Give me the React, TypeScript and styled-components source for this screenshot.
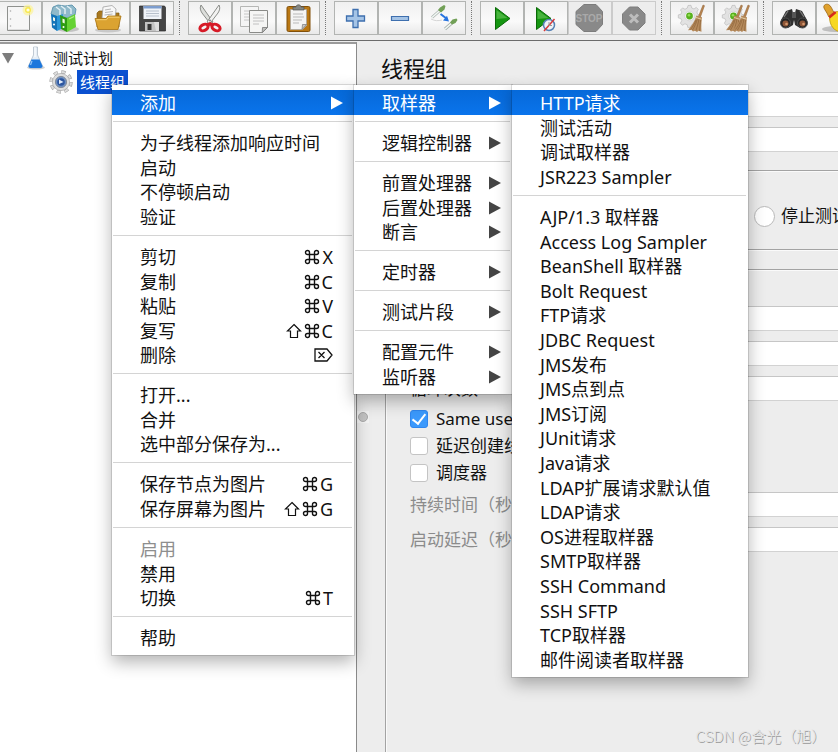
import React from 'react';
import styled, { createGlobalStyle, css } from 'styled-components';

const Global = createGlobalStyle`
  * { box-sizing: border-box; }
  body {
    margin: 0;
    overflow: hidden;
    background: #ededed;
    color: #111;
    font-family: "Noto Sans", "Noto Sans CJK SC", sans-serif;
  }
`;

const Window = styled.div`
  position: relative;
  display: flex;
  flex-direction: column;
  height: 100vh;
  overflow: hidden;
  background: #ededed;
`;

/* ---------- toolbar ---------- */

const Toolbar = styled.header`
  display: flex;
  flex: none;
  height: 41px;
  padding-top: 1px;
  margin-left: -2px;
  background: #ededed;
  border-bottom: 1px solid #6b6b6b;
`;

const ToolGroup = styled.div`
  display: flex;
  flex: none;
  height: 34px;

  & + & {
    margin-left: 14px;
    position: relative;
  }

  & + &::before {
    content: '';
    position: absolute;
    left: -9px;
    top: 0;
    bottom: 0;
    border-left: 1px dotted #777;
  }
`;

const ToolButton = styled.button`
  display: flex;
  align-items: center;
  justify-content: center;
  width: 44px;
  height: 34px;
  padding: 0;
  border: 1px solid #b2b4b2;
  background: linear-gradient(#f0f0f0, #fafafa 60%, #e9e9e9);

  &:disabled {
    border-color: #cbcbcb;
    background: #ededed;
  }
`;

const Icon = styled.svg`
  display: block;
  flex: none;
  overflow: visible;
`;

const Tool = ({ label, disabled, children }: { label: string; disabled?: boolean; children: React.ReactNode }) => (
  <ToolButton type="button" aria-label={label} disabled={disabled}>
    <Icon width="32" height="32" viewBox="0 0 32 32">{children}</Icon>
  </ToolButton>
);

const PlusShape = 'M14 7.500h5v6.500h6.500v5H19v6.500h-5V19H7.500v-5H14z';

const Broom = ({ x = 0 }: { x?: number }) => (
  <g transform={`translate(${x} 0)`}>
    <path d="M26 3l1.500.7-4.300 12-2-.7z" fill="#b98550" stroke="#8b5f32" strokeWidth=".5" />
    <path d="M19.500 13.500l5.500 1.800c-.5 4-1 9.500-.5 14.500l-3-1-1.500 1.200-2-1.200-2 .7-1.500-1.500-3.500.3c3-4.500 7-9 8.500-14.800z" fill="#b58a5c" />
    <path d="M20.500 16c-1 5-3 8.500-5 12M22 16.500c-.7 5-2 8.500-3 12M23.800 17c-.6 5-1 8-1.200 12M19 18c-1.500 4-3.500 7-5.500 9.500" fill="none" stroke="#8d6338" strokeWidth=".7" />
    <path d="M19 15.500l5.600 1.800" stroke="#e6cfa5" />
  </g>
);

const GearBits = () => (
  <>
    <path d="M12 3.500l3-.2.700 2.700 2.300 1 2.300-1.600 2 2.100-1.400 2.500.8 2.300 2.700.7v3l-2.700.7-1 2.300 1.600 2.300-2.200 2-2.300-1.400-2.300.9-.7 2.600h-3l-.6-2.700-2.300-.9-2.500 1.500-2-2.200 1.400-2.400-.9-2.200-2.600-.6v-3l2.700-.7.9-2.300L4.500 8l2.100-2.100L9 7.300 11.300 6z" fill="#e2e2e2" stroke="#bcbcbc" strokeWidth=".7" />
    <circle cx="13.500" cy="14" r="4.800" fill="#f4f4f4" stroke="#c8c8c8" strokeWidth=".6" />
    <circle cx="13.500" cy="14" r="3.400" fill="#57b11c" />
    <circle cx="13" cy="13.200" r="1.300" fill="#93dd55" />
  </>
);

const TopBar = () => (
  <Toolbar>
    <ToolGroup>
      <Tool label="New">
        <path d="M3.500 4.500h22v24h-22z" fill="#f6f6f6" stroke="#8f918e" />
        <path d="M4.500 27.500h20" stroke="#ddd" />
        <circle cx="6.500" cy="9" r=".8" fill="#aaa" />
        <circle cx="6.500" cy="17" r=".8" fill="#aaa" />
        <circle cx="6.500" cy="24" r=".8" fill="#aaa" />
        <circle cx="24" cy="8" r="5.500" fill="#fbf3a0" opacity=".75" />
        <circle cx="24" cy="8" r="3" fill="#f8e84c" />
        <circle cx="24" cy="8" r="1.600" fill="#fffde0" />
      </Tool>
      <Tool label="Templates">
        <ellipse cx="20" cy="27" rx="11" ry="3" fill="#000" opacity=".18" />
        <path d="M3 12l2-7 5-2 7 1 7-1 4 4-1 6-8 3-9-1z" fill="#8fb9ca" stroke="#4f8aa6" strokeWidth=".8" />
        <path d="M8 5l4 3v6M13 4l4 3v5M19 4l4 3v5" fill="none" stroke="#e4f1f6" strokeWidth="1.400" />
        <path d="M3 12l6 2v15l-5-3.500z" fill="#1273b8" />
        <path d="M9 14l6-2v14l-6 3z" fill="#2b97d8" />
        <path d="M12 13l7 3v14l-6-3z" fill="#2d9c12" />
        <path d="M19 16l8-4 1 13-9 5z" fill="#65d233" />
        <path d="M5 15v3.500l2 .8V16zM14.500 16.500v4l2.200 1v-4z" fill="#f3f8e9" />
        <circle cx="6" cy="22.500" r="1" fill="#fff" />
        <circle cx="15.500" cy="25" r="1" fill="#fff" />
        <path d="M21 17l5-2.500" stroke="#b2f089" strokeWidth="1.200" />
      </Tool>
      <Tool label="Open">
        <ellipse cx="16" cy="28" rx="13" ry="2.500" fill="#000" opacity=".15" />
        <path d="M5 11l2-2h7l2 2h11v14H5z" fill="#a9781f" stroke="#80590f" strokeWidth=".7" />
        <path d="M10 16l1-11 9-1.500L24 7l-1 11z" fill="#f8f8f8" stroke="#979797" strokeWidth=".7" />
        <path d="M13 8l6-1M13 10.500l8-1M12.500 13l8-1" stroke="#b0b0b0" strokeWidth=".9" />
        <path d="M3 16.500h11l2-2.500h13l-3 13.500H6z" fill="#dba331" stroke="#a87413" strokeWidth=".8" />
        <path d="M4.500 17.700h10l2-2.500h11" fill="none" stroke="#f3ce74" />
      </Tool>
      <Tool label="Save">
        <path d="M3.500 4h25l1 1.500V29h-26z" fill="#464646" stroke="#292929" strokeWidth=".7" />
        <path d="M7.500 4h18v13h-18z" fill="#f0f3f8" />
        <path d="M7.500 4h18v2.500h-18z" fill="#7d9dce" />
        <path d="M10 9h13M10 11.500h13M10 14h13" stroke="#b8c0cc" />
        <path d="M9 20h14v9H9z" fill="#c3c3c3" />
        <path d="M11.500 22h4v6h-4z" fill="#383838" />
        <path d="M18 20h5v9h-3z" fill="#dedede" />
      </Tool>
    </ToolGroup>

    <ToolGroup>
      <Tool label="Cut">
        <path d="M7 3c-1.500 3-.5 5.500 1 8l8.500 11 2.500-2z" fill="#dcdedb" stroke="#7f817d" strokeWidth=".9" />
        <path d="M25 3c1.500 3 .5 5.500-1 8l-8.500 11-2.500-2z" fill="#f2f2f1" stroke="#7f817d" strokeWidth=".9" />
        <circle cx="16" cy="18.500" r=".9" fill="#777" />
        <ellipse cx="10" cy="25.500" rx="4.300" ry="3" fill="#f2f2f2" stroke="#d61a26" strokeWidth="3" transform="rotate(-26 10 25.500)" />
        <ellipse cx="22" cy="25.500" rx="4.300" ry="3" fill="#f2f2f2" stroke="#d61a26" strokeWidth="3" transform="rotate(26 22 25.500)" />
        <path d="M12.500 21.500l3.500-1.500 3.500 1.500-2 3.500-1.500-1.500-1.500 1.500z" fill="#d61a26" />
      </Tool>
      <Tool label="Copy">
        <path d="M2.500 4.500h18v20h-18z" fill="#f5f5f5" stroke="#b6b7b5" />
        <path d="M6 9h11M6 12h6M6 15h5M6 18h5" stroke="#c6c6c6" />
        <path d="M11.500 8.500h18v17l-5 5h-13z" fill="#f5f5f4" stroke="#8a8b88" />
        <path d="M15 13h11M15 16h11M15 19h11M15 22h6" stroke="#c0c0c0" />
        <path d="M29.500 25.500h-5l-.3 5z" fill="#c0c1be" stroke="#777" strokeWidth=".8" />
      </Tool>
      <Tool label="Paste">
        <rect x="5" y="4.500" width="23" height="25" rx="1.500" fill="#b97713" stroke="#81500a" />
        <path d="M8.500 7.500h16v16l-4 4h-12z" fill="#f4f4f4" stroke="#a5a5a5" strokeWidth=".7" />
        <path d="M11 8V5h3c0-3 5-3 5 0h3v3z" fill="#858782" stroke="#555" strokeWidth=".7" />
        <path d="M11 12h10M11 15h11M11 18h9M11 21h6" stroke="#b9b9b9" />
        <path d="M24.500 22.500h-4l-.5 5z" fill="#c8c8c8" stroke="#777" strokeWidth=".7" />
      </Tool>
    </ToolGroup>

    <ToolGroup>
      <Tool label="Expand all">
        <path d={PlusShape} transform="translate(-1 0)" fill="#a5c4e6" stroke="#3e6fae" strokeWidth="1.300" />
      </Tool>
      <Tool label="Collapse all">
        <path d="M7.500 14.500h17v4h-17z" fill="#a5c4e6" stroke="#3e6fae" strokeWidth="1.200" />
      </Tool>
      <Tool label="Toggle">
        <path d="M4 15.500l9-8M17 27l8-7" stroke="#a9b3ae" strokeWidth="3" />
        <path d="M4 15.500l9-8M17 27l8-7" stroke="#f2f7f4" strokeWidth="1.600" />
        <path d="M10 8l2-2.500 4-2.500 1.500 1-1 3.500-3.500 3zM22 20.500l2.500-3 4-1 1 1.500-2 3-3.500 1.500z" fill="#72a057" />
        <path d="M3 17c4 2 7 2 11 1" fill="none" stroke="#d5d5d5" />
        <path d="M12.500 12l6 4.500" stroke="#2774df" strokeWidth="2" />
        <path d="M21 19.500l-6-1 4-4.800z" fill="#2774df" />
      </Tool>
    </ToolGroup>

    <ToolGroup>
      <Tool label="Start">
        <path d="M9.500 5.500v22L24 16.500z" fill="#159611" stroke="#0a6907" />
        <path d="M10.500 8v9l11-1z" fill="#59bd4e" opacity=".75" />
      </Tool>
      <Tool label="Start no pauses">
        <path d="M6.500 5.500v22L21 16.500z" fill="#159611" stroke="#0a6907" />
        <path d="M7.500 8v9l11-1z" fill="#59bd4e" opacity=".75" />
        <circle cx="19" cy="23" r="5.500" fill="#eef3f8" stroke="#5581b5" strokeWidth="1.500" />
        <path d="M14 29l10.500-12" stroke="#d83a3a" strokeWidth="1.500" />
        <path d="M19 20v3.500h3" fill="none" stroke="#999" />
      </Tool>
      <Tool label="Stop" disabled>
        <path d="M10 2.500h12l6.500 7v13l-6.500 7H10l-8-7v-13z" fill="#898989" stroke="#7c7c7c" />
        <text x="15" y="20" textAnchor="middle" fontFamily="Liberation Sans" fontSize="10" fontWeight="700" fill="#a9a9a9">STOP</text>
      </Tool>
      <Tool label="Shutdown" disabled>
        <path d="M11.500 5h8.500l7 7v9l-7 7h-8.500l-7-7V12z" fill="#898989" stroke="#7e7e7e" />
        <path d="M12 12.500l8 8M20 12.500l-8 8" stroke="#bdbdbd" strokeWidth="3" />
      </Tool>
    </ToolGroup>

    <ToolGroup>
      <Tool label="Clear">
        <GearBits />
        <Broom x={1} />
      </Tool>
      <Tool label="Clear all">
        <GearBits />
        <Broom x={-5} />
        <Broom x={2} />
      </Tool>
    </ToolGroup>

    <ToolGroup>
      <Tool label="Search">
        <path d="M3 18L8 9l6-2 1 4h2l1-4 6 2 5 9-1 5-6 3-5-3-1-5-1 5-5 3-6-3z" fill="#303030" />
        <path d="M6 15l4-6M26 15l-4-6" stroke="#7b7b7b" strokeWidth="1.300" />
        <rect x="14" y="10" width="4" height="6" fill="#555" />
        <circle cx="7.500" cy="21" r="5" fill="#252525" stroke="#4d4d4d" />
        <circle cx="24.500" cy="21" r="5" fill="#252525" stroke="#4d4d4d" />
        <circle cx="7.500" cy="21.500" r="3" fill="#8e5637" />
        <circle cx="24.500" cy="21.500" r="3" fill="#8e5637" />
        <circle cx="8.500" cy="22" r="1.300" fill="#d59a70" />
        <circle cx="25.500" cy="22" r="1.300" fill="#d59a70" />
      </Tool>
      <Tool label="Reset search">
        <ellipse cx="13" cy="27" rx="13" ry="3" fill="#000" opacity=".2" />
        <path d="M2 6c-1-3 2-4.500 4.500-3.500 2.500 1 3.500 5 5.500 8l-5.500 4C5.500 11 3 8.500 2 6z" fill="#e0a12c" stroke="#9a6412" strokeWidth=".8" />
        <path d="M7.500 15l7-5.500c7 .5 12 5 14 10.500l-9 10c-7-.5-12-6-12-15z" fill="#f7d823" stroke="#ba9310" strokeWidth=".8" />
        <path d="M6.500 14.500l6.500-5.500 1.500 2-6.500 5.500z" fill="#d72b1b" />
      </Tool>
    </ToolGroup>
  </Toolbar>
);

/* ---------- tree ---------- */

const Workspace = styled.div`
  display: flex;
  flex: 1;
  min-height: 0;
  padding-top: 1px;
`;

const TreePane = styled.nav`
  flex: none;
  width: 357px;
  padding-top: 2px;
  background: #fff;
  border-top: 2px solid #9b9b9b;
  border-right: 1px solid #8a8a8a;
  font-size: 15px;
  line-height: 24px;
`;

const TreeRow = styled.div<{ $depth: number }>`
  display: flex;
  align-items: center;
  gap: 4px;
  height: 24px;
  padding-left: ${(p) => (p.$depth ? 49 : 2)}px;
`;

const TreeLabel = styled.span<{ $selected?: boolean }>`
  padding: 0 3px;
  ${(p) => p.$selected && css`
    background: #0a50d0;
    color: #fff;
  `}
`;

const Twisty = styled.button`
  display: flex;
  width: 19px;
  padding: 0;
  border: 0;
  background: none;
`;

/* ---------- split divider ---------- */

const Divider = styled.div`
  display: flex;
  flex: none;
  width: 12px;
  align-items: center;
`;

const Grip = styled.span`
  display: flex;
  align-items: center;
  justify-content: center;
  width: 12px;
  height: 12px;
  margin-top: 40px;
  background: #f4f4f4;

  &::before {
    content: '';
    width: 8px;
    height: 8px;
    border-radius: 50%;
    background: #c4c4c4;
    border: 1px solid #aaa;
  }
`;

/* ---------- editor ---------- */

const Editor = styled.main`
  display: flex;
  flex: 1;
  min-width: 0;
  flex-direction: column;
  padding-left: 12px;
  overflow: hidden;
`;

const Title = styled.h1`
  margin: 10px 0 8px;
  font-size: 22px;
  font-weight: 400;
  line-height: 32px;
`;

const Field = styled.input`
  display: block;
  flex: none;
  height: 25px;
  width: 100%;
  padding: 0 4px;
  border: 0;
  border-top: 1px solid #c6c6c6;
  border-bottom: 1px solid #d2d2d2;
  background: #fff;
`;

const HeadFields = styled.div`
  display: grid;
  gap: 10px;
  padding-left: 80px;
`;

const Group = styled.section<{ $gap: number; $grow?: boolean }>`
  display: flex;
  flex-direction: column;
  flex: ${(p) => (p.$grow ? '1' : 'none')};
  margin: ${(p) => p.$gap}px 0 0 4px;
  border: 1px solid #a3a3a3;
  border-right: 0;
  ${(p) => p.$grow && css`border-bottom: 0;`}
  box-shadow: inset 1px 1px #fafafa, 0 1px #fafafa;
  font-size: 17px;
  white-space: nowrap;
`;

const RadioRow = styled.label`
  display: flex;
  align-items: center;
  gap: 6px;
  height: 78px;
  padding: 12px 0 0 368px;
  line-height: 20px;
`;

const Radio = styled.input`
  appearance: none;
  flex: none;
  width: 21px;
  height: 21px;
  margin: 0;
  border: 1px solid #b9b9b9;
  border-radius: 50%;
  background: #fff;
`;

const Form = styled.div`
  display: flex;
  flex-direction: column;
  gap: 10px;
  padding: 36px 0 0 24px;
`;

const FieldRow = styled.label<{ $muted?: boolean }>`
  display: grid;
  grid-template-columns: 110px 1fr;
  align-items: center;
  height: 25px;
  line-height: 24px;
  color: ${(p) => (p.$muted ? '#8b8b8b' : '#111')};
`;

const CheckList = styled.div`
  margin: -6px 0 -4px;
`;

const CheckRow = styled.label`
  display: flex;
  align-items: center;
  gap: 8px;
  height: 27px;
  line-height: 24px;
`;

const Check = styled.input`
  appearance: none;
  display: grid;
  place-items: center;
  flex: none;
  width: 18px;
  height: 18px;
  margin: 0;
  border: 1px solid #c4c4c4;
  border-radius: 3px;
  background: #fff;

  &:checked {
    border-color: #2f86ee;
    background: #3b99fc;
  }

  &:checked::before {
    content: '';
    width: 6px;
    height: 11px;
    margin-bottom: 3px;
    border: solid #fff;
    border-width: 0 2px 2px 0;
    transform: rotate(38deg);
  }
`;

/* ---------- menus ---------- */

const MenuLayer = styled.div`
  position: absolute;
  top: 85px;
  left: 112px;
  display: flex;
  align-items: flex-start;
`;

const MenuBox = styled.div<{ $width: number }>`
  width: ${(p) => p.$width}px;
  padding: 5px 0;
  background: #fff;
  box-shadow: 0 0 0 1px rgba(0, 0, 0, 0.12), 0 7px 16px rgba(0, 0, 0, 0.3);
  font-size: 18px;
  white-space: nowrap;
`;

const MenuGroup = styled.div`
  & + &::before {
    content: '';
    display: block;
    height: 1px;
    margin: 6px 2px 8px 1px;
    background: #d4d4d4;
  }
`;

const MenuItems = styled.div`
  display: flex;
  flex-direction: column;
`;

const MenuItem = styled.button<{ $active?: boolean; $submenu?: boolean }>`
  display: flex;
  align-items: center;
  justify-content: space-between;
  height: 25px;
  padding: 0 ${(p) => (p.$submenu ? 11 : 21)}px 0 28px;
  border: 0;
  background: ${(p) => (p.$active ? 'linear-gradient(#0669d9, #0a74ec)' : 'none')};
  color: ${(p) => (p.$active ? '#fff' : '#111')};
  font: inherit;
  line-height: 24px;
  text-align: left;

  &:nth-child(5n + 3),
  &:nth-child(5n) {
    height: 24px;
  }

  &:disabled {
    color: #8e8e8e;
  }
`;

const Keys = styled.span`
  display: flex;
  align-items: center;
  gap: 2px;
`;

type Item = { text: string; keys?: string; disabled?: boolean; active?: boolean };

const KeyGlyph = ({ k }: { k: string }) => {
  if (k === '⌘') {
    return (
      <Icon width="16" height="16" viewBox="0 0 16 16" fill="none" stroke="#111" strokeWidth="1.400" aria-label="Command">
        <path d="M5.500 5.500h5v5h-5zM5.500 5.500h-2a2 2 0 1 1 2-2zM10.500 5.500v-2a2 2 0 1 1 2 2zM10.500 10.500h2a2 2 0 1 1-2 2zM5.500 10.500v2a2 2 0 1 1-2-2z" />
      </Icon>
    );
  }
  if (k === '⇧') {
    return (
      <Icon width="16" height="16" viewBox="0 0 16 16" fill="none" stroke="#111" strokeWidth="1.200" aria-label="Shift">
        <path d="M8 1.500l6.500 6.500h-3v6.500h-7V8h-3z" />
      </Icon>
    );
  }
  if (k === '⌦') {
    return (
      <Icon width="19" height="14" viewBox="0 0 19 14" fill="none" stroke="#111" strokeWidth="1.300" aria-label="Delete">
        <path d="M1 1h12l5 6-5 6H1zM4.500 4l6 6M10.500 4l-6 6" />
      </Icon>
    );
  }
  return <span>{k}</span>;
};

const Menu = ({ width, groups, submenu }: { width: number; groups: Item[][]; submenu?: (i: Item) => boolean }) => (
  <MenuBox role="menu" $width={width}>
    {groups.map((items, g) => (
      <MenuGroup key={g}>
        <MenuItems>
          {items.map((item) => {
            const sub = submenu ? submenu(item) : false;
            return (
              <MenuItem key={item.text} type="button" role="menuitem" disabled={item.disabled} $active={item.active} $submenu={sub}>
                <span>{item.text}</span>
                {item.keys && <Keys>{[...item.keys].map((k) => <KeyGlyph key={k} k={k} />)}</Keys>}
                {sub && (
                  <Icon width="12" height="14" viewBox="0 0 12 14" fill={item.active ? '#fff' : '#444'}>
                    <path d="M0 .5v13L12 7z" />
                  </Icon>
                )}
              </MenuItem>
            );
          })}
        </MenuItems>
      </MenuGroup>
    ))}
  </MenuBox>
);

const list = (...names: string[]): Item[] => names.map((text) => ({ text }));

const contextMenu: Item[][] = [
  [{ text: '添加', active: true }],
  list('为子线程添加响应时间', '启动', '不停顿启动', '验证'),
  [
    { text: '剪切', keys: '⌘X' },
    { text: '复制', keys: '⌘C' },
    { text: '粘贴', keys: '⌘V' },
    { text: '复写', keys: '⇧⌘C' },
    { text: '删除', keys: '⌦' },
  ],
  list('打开...', '合并', '选中部分保存为...'),
  [
    { text: '保存节点为图片', keys: '⌘G' },
    { text: '保存屏幕为图片', keys: '⇧⌘G' },
  ],
  [{ text: '启用', disabled: true }, { text: '禁用' }, { text: '切换', keys: '⌘T' }],
  list('帮助'),
];

const addMenu: Item[][] = [
  [{ text: '取样器', active: true }],
  list('逻辑控制器'),
  list('前置处理器', '后置处理器', '断言'),
  list('定时器'),
  list('测试片段'),
  list('配置元件', '监听器'),
];

const samplerMenu: Item[][] = [
  [{ text: 'HTTP请求', active: true }, ...list('测试活动', '调试取样器', 'JSR223 Sampler')],
  list(
    'AJP/1.3 取样器', 'Access Log Sampler', 'BeanShell 取样器', 'Bolt Request', 'FTP请求',
    'JDBC Request', 'JMS发布', 'JMS点到点', 'JMS订阅', 'JUnit请求', 'Java请求',
    'LDAP扩展请求默认值', 'LDAP请求', 'OS进程取样器', 'SMTP取样器', 'SSH Command',
    'SSH SFTP', 'TCP取样器', '邮件阅读者取样器',
  ),
];

const Watermark = styled.div`
  position: absolute;
  right: 12px;
  bottom: 4px;
  color: #e4e4e4;
  font-family: "Noto Sans CJK SC", sans-serif;
  font-weight: 300;
  font-size: 15px;
  line-height: 24px;
  text-shadow: 1px 1px 0 #999;
`;

export default function App() {
  return (
    <Window>
      <Global />
      <TopBar />
      <Workspace>
        <TreePane>
          <TreeRow $depth={0}>
            <Twisty type="button" aria-label="Collapse">
              <Icon width="12" height="11" viewBox="0 0 12 11"><path d="M0 0h12L6 10.500z" fill="#7d7d7d" /></Icon>
            </Twisty>
            <Icon width="21" height="24" viewBox="0 0 21 24">
              <ellipse cx="11" cy="21.500" rx="9" ry="2" fill="#000" opacity=".18" />
              <path d="M8.500 1h4v8l5 11q0 2-2 2h-10q-2 0-2-2l5-11z" fill="#e6eef6" stroke="#b3bfca" strokeWidth=".8" />
              <path d="M6.500 13.500h8l3 6.500q0 2-2 2h-10q-2 0-2-2z" fill="#1c77dc" />
              <path d="M7 15l-1.500 4" stroke="#8dc2f7" strokeWidth="1.300" />
              <path d="M10 1v10" stroke="#fff" />
            </Icon>
            <TreeLabel>测试计划</TreeLabel>
          </TreeRow>
          <TreeRow $depth={1}>
            <Icon width="24" height="24" viewBox="0 0 24 24">
              <circle cx="12" cy="12" r="10" fill="none" stroke="#a9a9a9" strokeWidth="3.400" strokeDasharray="4.300 3.554" />
              <circle cx="12" cy="12" r="10" fill="none" stroke="#dedede" strokeWidth="2" strokeDasharray="3.300 4.554" strokeDashoffset="-.5" />
              <circle cx="12" cy="12" r="8.600" fill="#dedede" stroke="#a9a9a9" strokeWidth=".7" />
              <circle cx="12" cy="12" r="5.600" fill="#6d8fc2" stroke="#858d99" />
              <circle cx="12" cy="12" r="3.800" fill="#2c56a0" />
              <path d="M10 9.500l4.500 2.500-4.500 2z" fill="#e1ecfa" />
            </Icon>
            <TreeLabel $selected>线程组</TreeLabel>
          </TreeRow>
        </TreePane>
        <Divider><Grip /></Divider>
        <Editor>
          <Title>线程组</Title>
          <HeadFields>
            <Field aria-label="名称" />
            <Field aria-label="注释" />
          </HeadFields>
          <Group $gap={18}>
            <RadioRow>
              <Radio type="radio" name="onError" />
              停止测试
            </RadioRow>
          </Group>
          <Group $gap={19} $grow>
            <Form>
              <FieldRow><span /><Field aria-label="线程数" /></FieldRow>
              <FieldRow><span /><Field aria-label="Ramp-Up时间" /></FieldRow>
              <FieldRow><span>循环次数</span><Field /></FieldRow>
              <CheckList>
                <CheckRow><Check type="checkbox" defaultChecked />Same user on each iteration</CheckRow>
                <CheckRow><Check type="checkbox" />延迟创建线程直到需要</CheckRow>
                <CheckRow><Check type="checkbox" />调度器</CheckRow>
              </CheckList>
              <FieldRow $muted><span>持续时间（秒）</span><Field /></FieldRow>
              <FieldRow $muted><span>启动延迟（秒）</span><Field /></FieldRow>
            </Form>
          </Group>
        </Editor>
      </Workspace>
      <MenuLayer>
        <Menu width={242} groups={contextMenu} submenu={(i) => !!i.active} />
        <Menu width={158} groups={addMenu} submenu={() => true} />
        <Menu width={236} groups={samplerMenu} />
      </MenuLayer>
      <Watermark>CSDN @含光（旭）</Watermark>
    </Window>
  );
}
